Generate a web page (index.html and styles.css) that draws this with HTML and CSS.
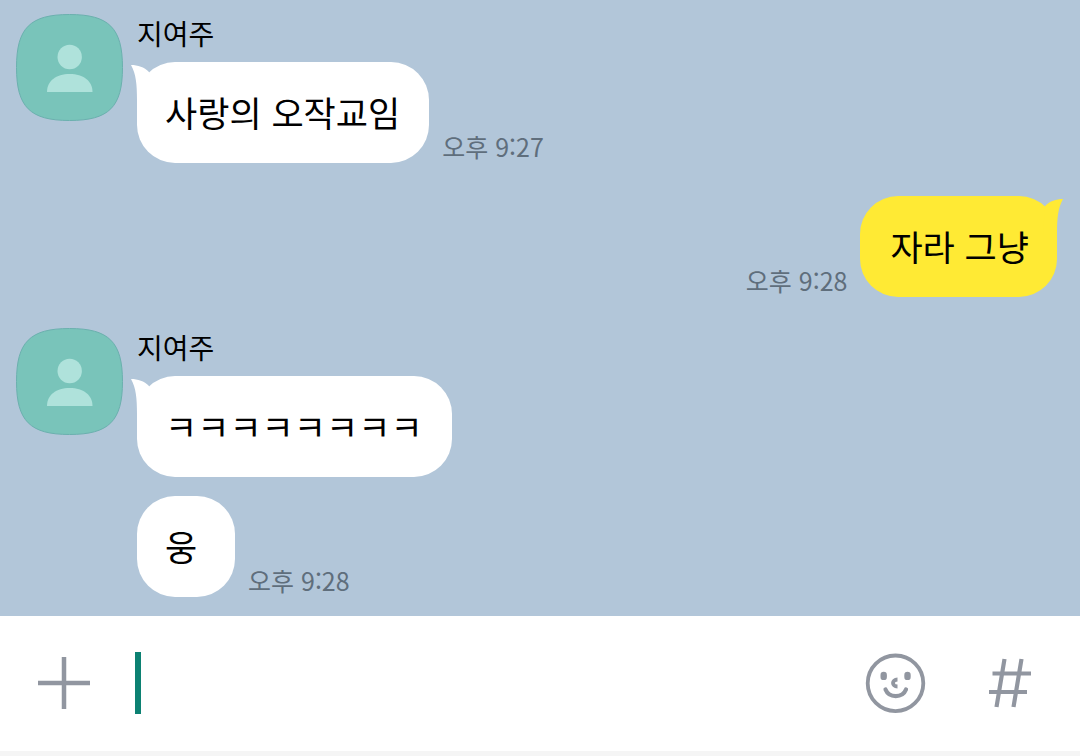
FILE: index.html
```html
<!DOCTYPE html>
<html lang="ko">
<head>
<meta charset="utf-8">
<meta name="viewport" content="width=device-width, initial-scale=1">
<title>지여주</title>
<link rel="stylesheet" href="styles.css">
</head>
<body>
<svg class="defs" aria-hidden="true">
  <symbol id="avatar" viewBox="0 0 107 107">
    <path class="avatar-bg" d="M53.5 .5C93 .5 106.500 14 106.500 53.500S93 106.500 53.500 106.500.5 93 .5 53.500 14 .5 53.500 .5Z"/>
    <circle class="avatar-fg" cx="53.700" cy="43" r="12.200"/>
    <path class="avatar-fg" d="M31 78C31 67 40 60 53.700 60S76.500 67 76.500 78Z"/>
  </symbol>
  <symbol id="tail" viewBox="0 0 20 38">
    <path d="M0 3C7 3 13 5 18 10L20 38H6C6 22 5 12 0 3Z"/>
  </symbol>
</svg>
<main class="chat">
  <section class="incoming">
    <svg class="avatar" role="img" aria-label="프로필"><use href="#avatar"/></svg>
    <div class="thread">
      <h2 class="name">지여주</h2>
      <div class="line">
        <p class="bubble">사랑의 오작교임<svg class="tail" aria-hidden="true"><use href="#tail"/></svg></p>
        <time class="time">오후 9:27</time>
      </div>
    </div>
  </section>
  <section class="outgoing">
    <div class="line">
      <time class="time">오후 9:28</time>
      <p class="bubble mine">자라 그냥<svg class="tail" aria-hidden="true"><use href="#tail"/></svg></p>
    </div>
  </section>
  <section class="incoming">
    <svg class="avatar" role="img" aria-label="프로필"><use href="#avatar"/></svg>
    <div class="thread">
      <h2 class="name">지여주</h2>
      <div class="line">
        <p class="bubble">ㅋㅋㅋㅋㅋㅋㅋㅋ<svg class="tail" aria-hidden="true"><use href="#tail"/></svg></p>
      </div>
      <div class="line">
        <p class="bubble">웅</p>
        <time class="time">오후 9:28</time>
      </div>
    </div>
  </section>
</main>
<form class="composer">
  <button class="tool" type="button" aria-label="추가">
    <svg class="icon" viewBox="0 0 64 64"><path class="stroke" stroke-width="4.500" d="M6 32H58M32 6V58"/></svg>
  </button>
  <label class="field">
    <span class="caret"></span>
    <input class="input" type="text" aria-label="메시지 입력">
  </label>
  <button class="tool" type="button" aria-label="이모티콘">
    <svg class="icon" viewBox="0 0 64 64">
      <circle class="stroke" stroke-width="3.800" cx="31.500" cy="32.300" r="27.800"/>
      <rect class="solid" x="16.500" y="20.700" width="6.400" height="8.400" rx="3.200"/>
      <rect class="solid" x="40.300" y="20.700" width="6.400" height="8.400" rx="3.200"/>
      <path class="stroke" stroke-width="3.800" d="M33.500 28.500C27.500 28.500 27.500 35.500 33.500 35.500"/>
      <path class="stroke round" stroke-width="4.200" d="M21.500 38.500C25 47.200 38.500 47.200 42 38.500"/>
    </svg>
  </button>
  <button class="tool" type="button" aria-label="샵검색">
    <svg class="icon" viewBox="0 0 64 64"><path class="stroke" stroke-width="4.200" d="M26.500 8L18.500 56M43.500 8L35.500 56M14.500 22.500H53M11 41H49"/></svg>
  </button>
</form>
</body>
</html>
```
FILE: styles.css
```css
* {
  box-sizing: border-box;
}

body {
  display: flex;
  flex-direction: column;
  min-height: 100vh;
  margin: 0;
  background: #b2c6d9;
  color: #000;
  font-family: "Noto Sans CJK KR", sans-serif;
}

.defs {
  position: absolute;
  width: 0;
  height: 0;
}

.chat {
  flex: 1;
  padding: 14px 23px 19px 16px;
}

.incoming {
  display: flex;
  gap: 14px;
}

.outgoing {
  display: flex;
  justify-content: flex-end;
  margin: 33px 0 31px;
}

.avatar {
  flex: none;
  width: 107px;
  height: 107px;
}

.avatar-bg {
  fill: #79c4ba;
  stroke: #6bb0ae;
}

.avatar-fg {
  fill: #afe2db;
}

.name {
  margin: 0;
  padding-bottom: 10px;
  font-size: 28px;
  font-weight: 400;
  line-height: 38px;
}

.line {
  display: flex;
  align-items: flex-end;
  gap: 13px;
}

.line + .line {
  margin-top: 19px;
}

.bubble {
  position: relative;
  min-width: 98px;
  margin: 0;
  padding: 24px 29px 25px 28px;
  border-radius: 38px;
  background: #fff;
  font-size: 35px;
  line-height: 52px;
}

.mine {
  padding: 24px 28px 25px 30px;
  background: #ffea34;
}

.tail {
  position: absolute;
  top: 0;
  left: -6px;
  width: 20px;
  height: 38px;
  fill: #fff;
}

.mine .tail {
  right: -6px;
  left: auto;
  fill: #ffea34;
  transform: scaleX(-1);
}

.time {
  color: #5f6e7c;
  font-size: 25px;
  line-height: 33px;
}

.composer {
  display: flex;
  align-items: center;
  padding: 35px 38px 36px 32px;
  border-bottom: 5px solid #f5f5f5;
  background: #fff;
}

.tool {
  flex: none;
  padding: 0;
  border: 0;
  background: none;
}

.tool + .tool {
  margin-left: 50px;
}

.icon {
  display: block;
  width: 64px;
  height: 64px;
}

.stroke {
  fill: none;
  stroke: #9196a0;
}

.round {
  stroke-linecap: round;
}

.solid {
  fill: #9196a0;
}

.field {
  display: flex;
  flex: 1;
  align-items: center;
  margin-left: 39px;
}

.caret {
  width: 6px;
  height: 62px;
  background: #0c8172;
}

.input {
  flex: 1;
  min-width: 0;
  height: 62px;
  padding: 0;
  border: 0;
  outline: 0;
  background: none;
  font: inherit;
  font-size: 35px;
  caret-color: #0c8172;
}
```
